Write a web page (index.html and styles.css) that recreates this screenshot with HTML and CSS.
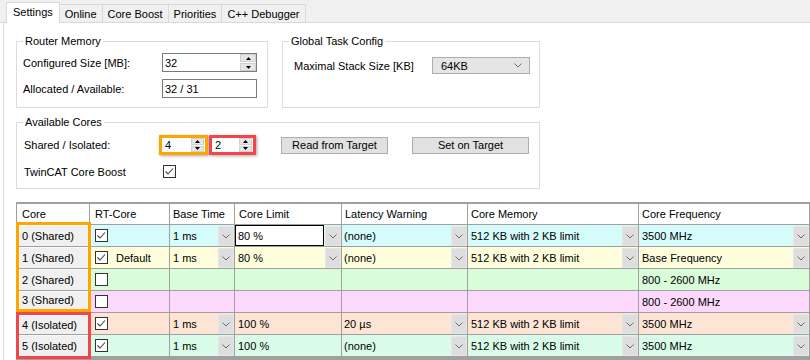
FILE: index.html
```html
<!DOCTYPE html>
<html>
<head>
<meta charset="utf-8">
<link rel="stylesheet" href="styles.css">
</head>
<body>
<div class="tabstrip">
  <div class="tab tab-active">Settings</div>
  <div class="tab">Online</div>
  <div class="tab">Core Boost</div>
  <div class="tab">Priorities</div>
  <div class="tab">C++ Debugger</div>
</div>
<div class="panel">
  <div class="top-row">
    <fieldset class="group router">
      <legend>Router Memory</legend>
      <div class="form">
        <span class="label">Configured Size [MB]:</span>
        <div class="textbox">32
          <div class="spin">
            <span class="spin-btn"><svg width="5" height="3" viewBox="0 0 5 3"><path d="M0 3 L2.5 0 L5 3Z"/></svg></span>
            <span class="spin-btn"><svg width="5" height="3" viewBox="0 0 5 3"><path d="M0 0 L2.5 3 L5 0Z"/></svg></span>
          </div>
        </div>
        <span class="label">Allocated / Available:</span>
        <div class="textbox">32 / 31</div>
      </div>
    </fieldset>
    <fieldset class="group task">
      <legend>Global Task Config</legend>
      <div class="task-row">
        <span class="task-label">Maximal Stack Size [KB]</span>
        <div class="select">64KB<svg width="8" height="5" viewBox="0 0 8 5"><path d="M0.5 0.5 L4 4 L7.5 0.5" fill="none" stroke="#6d6d6d"/></svg></div>
      </div>
    </fieldset>
  </div>

  <fieldset class="group cores">
    <legend>Available Cores</legend>
    <div class="cores-row">
      <span class="cores-label">Shared / Isolated:</span>
      <div class="hl hl-orange">
        <div class="numbox">4
          <div class="spin spin-small">
            <span class="spin-btn"><svg width="5" height="3" viewBox="0 0 5 3"><path d="M0 3 L2.5 0 L5 3Z"/></svg></span>
            <span class="spin-btn"><svg width="5" height="3" viewBox="0 0 5 3"><path d="M0 0 L2.5 3 L5 0Z"/></svg></span>
          </div>
        </div>
      </div>
      <div class="hl hl-red">
        <div class="numbox">2
          <div class="spin spin-small">
            <span class="spin-btn"><svg width="5" height="3" viewBox="0 0 5 3"><path d="M0 3 L2.5 0 L5 3Z"/></svg></span>
            <span class="spin-btn"><svg width="5" height="3" viewBox="0 0 5 3"><path d="M0 0 L2.5 3 L5 0Z"/></svg></span>
          </div>
        </div>
      </div>
      <div class="btn btn-read">Read from Target</div>
      <div class="btn btn-set">Set on Target</div>
    </div>
    <div class="cores-row cores-row2">
      <span class="boost-label">TwinCAT Core Boost</span>
      <svg class="check" width="13" height="13" viewBox="0 0 13 13"><rect x="0.5" y="0.5" width="12" height="12" fill="#fff" stroke="#333"/><path d="M2.5 6.5 L5 9 L10 3.5" fill="none" stroke="#444" stroke-width="1.1"/></svg>
    </div>
  </fieldset>

  <div class="grid">
    <div class="cell hcell hcell-core">Core</div>
    <div class="cell hcell hcell-rt">RT-Core</div>
    <div class="cell hcell">Base Time</div>
    <div class="cell hcell hcell-limit">Core Limit</div>
    <div class="cell hcell">Latency Warning</div>
    <div class="cell hcell">Core Memory</div>
    <div class="cell hcell">Core Frequency</div>

    <div class="core-group core-group-orange">
      <div class="core-cell">0 (Shared)</div>
      <div class="core-cell">1 (Shared)</div>
      <div class="core-cell">2 (Shared)</div>
      <div class="core-cell">3 (Shared)</div>
    </div>

    <!-- row 0 -->
    <div class="cell r0 rt"><svg class="check" width="13" height="13" viewBox="0 0 13 13"><rect x="0.5" y="0.5" width="12" height="12" fill="#fff" stroke="#333"/><path d="M2.5 6.5 L5 9 L10 3.5" fill="none" stroke="#444" stroke-width="1.1"/></svg></div>
    <div class="cell r0">1 ms<span class="dd"><svg width="8" height="5" viewBox="0 0 8 5"><path d="M0.5 0.5 L4 4 L7.5 0.5" fill="none" stroke="#6d6d6d"/></svg></span></div>
    <div class="cell r0 cell-edit"><span class="edit">80 %</span><span class="dd"><svg width="8" height="5" viewBox="0 0 8 5"><path d="M0.5 0.5 L4 4 L7.5 0.5" fill="none" stroke="#6d6d6d"/></svg></span></div>
    <div class="cell r0 lat">(none)<span class="dd"><svg width="8" height="5" viewBox="0 0 8 5"><path d="M0.5 0.5 L4 4 L7.5 0.5" fill="none" stroke="#6d6d6d"/></svg></span></div>
    <div class="cell r0">512 KB with 2 KB limit<span class="dd"><svg width="8" height="5" viewBox="0 0 8 5"><path d="M0.5 0.5 L4 4 L7.5 0.5" fill="none" stroke="#6d6d6d"/></svg></span></div>
    <div class="cell r0">3500 MHz<span class="dd"><svg width="8" height="5" viewBox="0 0 8 5"><path d="M0.5 0.5 L4 4 L7.5 0.5" fill="none" stroke="#6d6d6d"/></svg></span></div>

    <!-- row 1 -->
    <div class="cell r1 rt"><svg class="check" width="13" height="13" viewBox="0 0 13 13"><rect x="0.5" y="0.5" width="12" height="12" fill="#fff" stroke="#333"/><path d="M2.5 6.5 L5 9 L10 3.5" fill="none" stroke="#444" stroke-width="1.1"/></svg><span class="default">Default</span></div>
    <div class="cell r1">1 ms<span class="dd"><svg width="8" height="5" viewBox="0 0 8 5"><path d="M0.5 0.5 L4 4 L7.5 0.5" fill="none" stroke="#6d6d6d"/></svg></span></div>
    <div class="cell r1">80 %<span class="dd"><svg width="8" height="5" viewBox="0 0 8 5"><path d="M0.5 0.5 L4 4 L7.5 0.5" fill="none" stroke="#6d6d6d"/></svg></span></div>
    <div class="cell r1 lat">(none)<span class="dd"><svg width="8" height="5" viewBox="0 0 8 5"><path d="M0.5 0.5 L4 4 L7.5 0.5" fill="none" stroke="#6d6d6d"/></svg></span></div>
    <div class="cell r1">512 KB with 2 KB limit<span class="dd"><svg width="8" height="5" viewBox="0 0 8 5"><path d="M0.5 0.5 L4 4 L7.5 0.5" fill="none" stroke="#6d6d6d"/></svg></span></div>
    <div class="cell r1">Base Frequency<span class="dd"><svg width="8" height="5" viewBox="0 0 8 5"><path d="M0.5 0.5 L4 4 L7.5 0.5" fill="none" stroke="#6d6d6d"/></svg></span></div>

    <!-- row 2 -->
    <div class="cell r2 rt"><svg class="check" width="13" height="13" viewBox="0 0 13 13"><rect x="0.5" y="0.5" width="12" height="12" fill="#fff" stroke="#333"/></svg></div>
    <div class="cell r2"></div>
    <div class="cell r2"></div>
    <div class="cell r2"></div>
    <div class="cell r2"></div>
    <div class="cell r2">800 - 2600 MHz</div>

    <!-- row 3 -->
    <div class="cell r3 rt"><svg class="check" width="13" height="13" viewBox="0 0 13 13"><rect x="0.5" y="0.5" width="12" height="12" fill="#fff" stroke="#333"/></svg></div>
    <div class="cell r3"></div>
    <div class="cell r3"></div>
    <div class="cell r3"></div>
    <div class="cell r3"></div>
    <div class="cell r3">800 - 2600 MHz</div>

    <div class="core-group core-group-red">
      <div class="core-cell">4 (Isolated)</div>
      <div class="core-cell">5 (Isolated)</div>
    </div>

    <!-- row 4 -->
    <div class="cell r4 rt"><svg class="check" width="13" height="13" viewBox="0 0 13 13"><rect x="0.5" y="0.5" width="12" height="12" fill="#fff" stroke="#333"/><path d="M2.5 6.5 L5 9 L10 3.5" fill="none" stroke="#444" stroke-width="1.1"/></svg></div>
    <div class="cell r4">1 ms<span class="dd"><svg width="8" height="5" viewBox="0 0 8 5"><path d="M0.5 0.5 L4 4 L7.5 0.5" fill="none" stroke="#6d6d6d"/></svg></span></div>
    <div class="cell r4">100 %</div>
    <div class="cell r4 lat">20 µs<span class="dd"><svg width="8" height="5" viewBox="0 0 8 5"><path d="M0.5 0.5 L4 4 L7.5 0.5" fill="none" stroke="#6d6d6d"/></svg></span></div>
    <div class="cell r4">512 KB with 2 KB limit<span class="dd"><svg width="8" height="5" viewBox="0 0 8 5"><path d="M0.5 0.5 L4 4 L7.5 0.5" fill="none" stroke="#6d6d6d"/></svg></span></div>
    <div class="cell r4">3500 MHz<span class="dd"><svg width="8" height="5" viewBox="0 0 8 5"><path d="M0.5 0.5 L4 4 L7.5 0.5" fill="none" stroke="#6d6d6d"/></svg></span></div>

    <!-- row 5 -->
    <div class="cell r5 rt"><svg class="check" width="13" height="13" viewBox="0 0 13 13"><rect x="0.5" y="0.5" width="12" height="12" fill="#fff" stroke="#333"/><path d="M2.5 6.5 L5 9 L10 3.5" fill="none" stroke="#444" stroke-width="1.1"/></svg></div>
    <div class="cell r5">1 ms<span class="dd"><svg width="8" height="5" viewBox="0 0 8 5"><path d="M0.5 0.5 L4 4 L7.5 0.5" fill="none" stroke="#6d6d6d"/></svg></span></div>
    <div class="cell r5">100 %</div>
    <div class="cell r5 lat">(none)<span class="dd"><svg width="8" height="5" viewBox="0 0 8 5"><path d="M0.5 0.5 L4 4 L7.5 0.5" fill="none" stroke="#6d6d6d"/></svg></span></div>
    <div class="cell r5">512 KB with 2 KB limit<span class="dd"><svg width="8" height="5" viewBox="0 0 8 5"><path d="M0.5 0.5 L4 4 L7.5 0.5" fill="none" stroke="#6d6d6d"/></svg></span></div>
    <div class="cell r5">3500 MHz<span class="dd"><svg width="8" height="5" viewBox="0 0 8 5"><path d="M0.5 0.5 L4 4 L7.5 0.5" fill="none" stroke="#6d6d6d"/></svg></span></div>
  </div>
</div>
</body>
</html>
```

FILE: styles.css
```css
* { box-sizing: border-box; }
html, body { margin: 0; padding: 0; background: #fff; }
body {
  width: 810px;
  height: 360px;
  overflow: hidden;
  font-family: "Liberation Sans", Arial, sans-serif;
  font-size: 11px;
  color: #000;
}

/* tabs */
.tabstrip {
  height: 23px;
  background: #f0f0f0;
  border-bottom: 1px solid #d9d9d9;
  display: flex;
  align-items: flex-end;
  padding-left: 6px;
}
.tab {
  height: 18px;
  line-height: 17px;
  padding: 1px 5px 0;
  border-top: 1px solid #d9d9d9;
  border-right: 1px solid #d9d9d9;
  background: #f0f0f0;
  white-space: nowrap;
}
.tab-active {
  height: 21px;
  line-height: 19px;
  padding: 0 6px;
  margin-bottom: -1px;
  background: #fff;
  border-left: 1px solid #d9d9d9;
}

/* panel */
.panel {
  margin-left: 3px;
  border-left: 1px solid #dadada;
  padding: 12px 0 0 12px;
  height: 337px;
}
.top-row { display: flex; gap: 14px; }

.group {
  margin: 0;
  padding: 5px 6px 9px;
  border: 1px solid #dcdcdc;
  min-width: 0;
  min-inline-size: 0;
}
.group legend {
  padding: 0 2px;
  line-height: 13px;
  height: 13px;
}

.router { width: 252px; }
.form {
  display: grid;
  grid-template-columns: 139px 95px;
  row-gap: 7px;
  align-items: center;
}
.textbox {
  height: 19px;
  border: 1px solid #7a7a7a;
  background: #fff;
  display: flex;
  align-items: center;
  padding-left: 2px;
}
.spin {
  margin-left: auto;
  align-self: stretch;
  width: 16px;
  display: flex;
  flex-direction: column;
  gap: 1px;
  padding: 0 0 0 0;
  background: #fff;
}
.spin-btn {
  flex: 1;
  background: #e6e6e6;
  border: 1px solid #d0d0d0;
  display: flex;
  align-items: center;
  justify-content: center;
}
.spin-btn svg { fill: #000; }

.task { width: 258px; padding-top: 9px; }
.task-row { display: flex; align-items: center; padding-left: 5px; }
.task-label { width: 138px; }
.select {
  width: 98px;
  height: 17px;
  background: #e5e5e5;
  border: 1px solid #adadad;
  display: flex;
  align-items: center;
  justify-content: space-between;
  padding: 0 7px 0 8px;
}

/* available cores */
.cores {
  width: 524px;
  margin-top: 8px;
  padding: 6px 6px 10px;
}
.cores-row { display: flex; align-items: center; height: 20px; }
.cores-label { width: 136px; padding-left: 1px; }
.boost-label { width: 140px; padding-left: 1px; }
.cores-row2 { margin-top: 10px; height: 13px; }
.check { display: block; flex: none; }

.hl {
  display: flex;
  height: 20px;
  border: 3px solid;
  box-shadow: 1px 1px 3px rgba(0, 0, 0, 0.35);
}
.hl-orange { width: 49px; border-color: #ffa500; }
.hl-red { width: 47px; border-color: #f2464b; margin-left: 1px; }
.numbox {
  flex: 1;
  background: #fff;
  display: flex;
  align-items: center;
  padding-left: 3px;
}
.spin-small { width: 13px; margin-right: 1px; }

.btn {
  height: 17px;
  background: #e1e1e1;
  border: 1px solid #adadad;
  display: flex;
  align-items: center;
  justify-content: center;
}
.btn-read { width: 107px; margin-left: 25px; }
.btn-set { width: 117px; margin-left: 24px; }

/* grid */
.grid {
  margin-top: 13px;
  width: 794px;
  display: grid;
  grid-template-columns: 73px 80px 65px 107px 126px 171px 171px;
  grid-template-rows: 21px repeat(6, 22px);
  border-left: 1px solid #a0a0a0;
  border-top: 2px solid #a0a0a0;
  border-bottom: 3px solid #a0a0a0;
}
.cell {
  border-right: 1px solid #a0a0a0;
  border-bottom: 1px solid #a0a0a0;
  display: flex;
  align-items: center;
  padding-left: 3px;
  white-space: nowrap;
  overflow: hidden;
}
.hcell { background: #fff; padding-left: 3px; }
.hcell-core, .hcell-rt { padding-left: 5px; }
.hcell-limit { padding-left: 4px; }
.rt { padding-left: 5px; }
.lat { padding-left: 2px; }
.default { margin-left: 8px; }

.r0 { background: #d5fbfb; }
.r1 { background: #fefedc; }
.r2 { background: #d9fcd9; }
.r3 { background: #fcd9fc; }
.r4 { background: #fde4d5; }
.r5 { background: #d9fce8; }

.dd {
  margin-left: auto;
  width: 16px;
  flex: none;
  align-self: stretch;
  margin-top: 1px;
  background: #dedede;
  border: 1px solid #e6e6e6;
  display: flex;
  align-items: center;
  justify-content: center;
}
.cell-edit { padding-left: 0; }
.edit {
  flex: 1;
  align-self: stretch;
  border: 1px solid #000;
  background: #fff;
  display: flex;
  align-items: center;
  padding-left: 2px;
  margin-right: 1px;
}

.core-group {
  grid-row: span 2;
  border: 3px solid;
  display: flex;
  flex-direction: column;
  position: relative;
  z-index: 1;
}
.core-group-orange {
  grid-row: span 4;
  border-color: #ffa500;
  margin: -3px -1px 1px -1px;
}
.core-group-red {
  border-color: #f2464b;
  margin: -1px -1px -2px -1px;
}
.core-cell {
  height: 22px;
  flex: none;
  background: #f0f0f0;
  border-bottom: 1px solid #a0a0a0;
  box-shadow: inset 1px 1px 0 #fafafa;
  display: flex;
  align-items: center;
  padding-left: 3px;
  white-space: nowrap;
}
.core-group-red .core-cell:first-child { height: 20px; }
.core-cell:last-child { flex: 1 1 0; height: auto; border-bottom: none; }
```
